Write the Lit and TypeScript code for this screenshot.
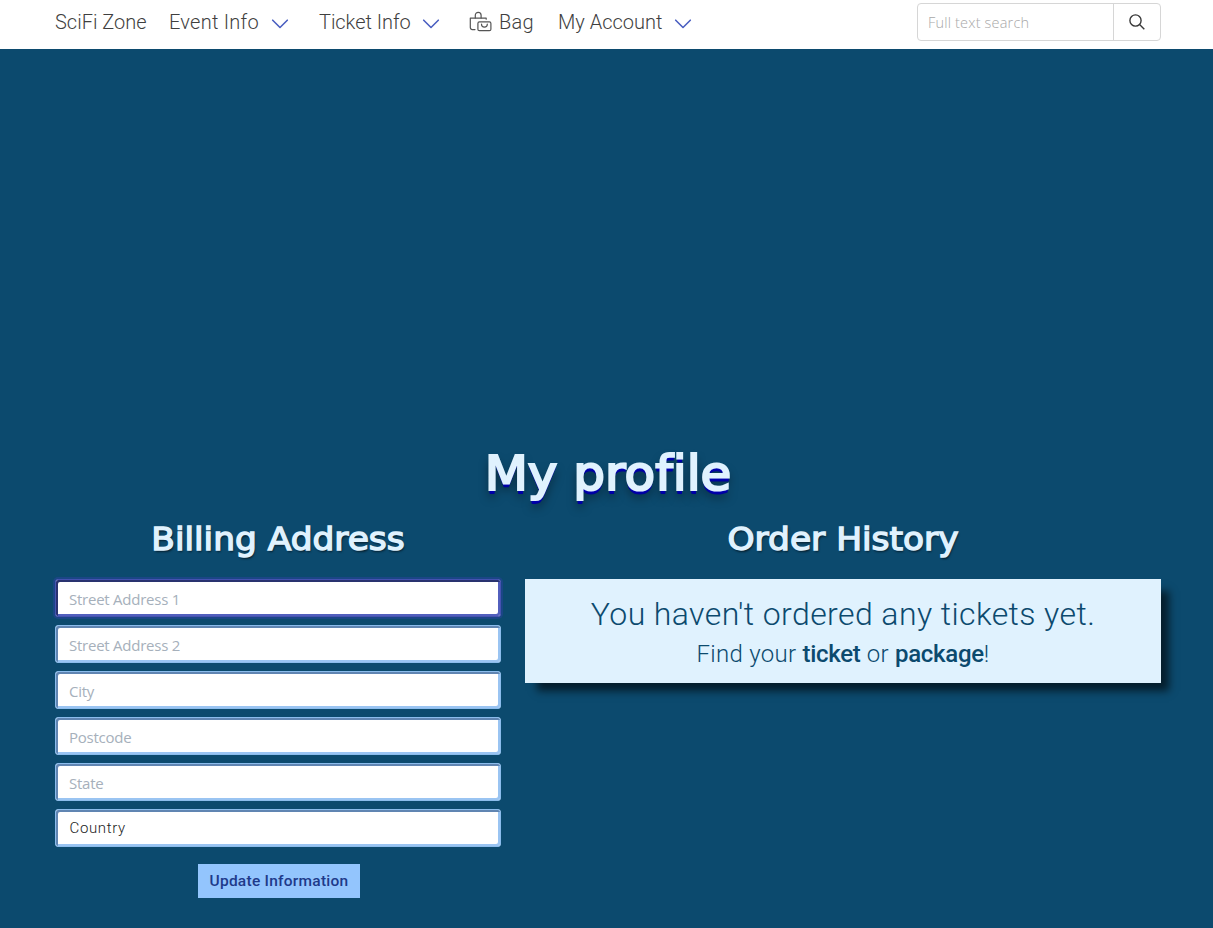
import { LitElement, html, css } from "lit";
import { customElement, property } from "lit/decorators.js";

const chevron = html`<svg class="chevron" width="18" height="12" viewBox="0 0 18 12" fill="none" stroke="#4a5fc1" stroke-width="1.6" stroke-linecap="round" stroke-linejoin="round"><path d="M1.700 2.200 9 9.500 16.300 2.200" /></svg>`;

const bag = html`<svg class="bag" width="24" height="22" viewBox="0 0 24 22" fill="none" stroke="#555" stroke-width="1.2" stroke-linejoin="round" stroke-linecap="round">
  <path d="M6 18.600H3.300A2 2 0 0 1 1.300 16.600V7.100H17.200V8.200" />
  <path d="M6.300 7V4.200A2.900 2.900 0 0 1 12.100 4.200V7" />
  <rect x="8.900" y="10.900" width="13" height="8.800" rx="1.500" />
  <path d="M12.500 13.200A2.900 2.900 0 0 0 18.300 13.200" />
</svg>`;

const magnifier = html`<svg width="18" height="18" viewBox="0 0 18 18" fill="none" stroke="#383838" stroke-width="1.4"><circle cx="7.500" cy="7.500" r="5.600" /><path d="M11.600 11.600 16.300 16.200" /></svg>`;

@customElement("site-nav")
export class SiteNav extends LitElement {
  static styles = css`
    :host { display: block; background: #fff; height: 49px; font: 300 20px/44px Roboto, sans-serif; color: #3f3f3f; }
    .bar { display: flex; padding: 0 52px 0 55px; height: 49px; box-sizing: border-box; }
    .links { display: flex; flex: 1; height: 44px; white-space: nowrap; }
    .item { display: flex; align-items: center; }
    .home { width: 114px; }
    .event, .ticket, .account { gap: 12px; }
    .event, .ticket { width: 150px; }
    .bagitem { width: 89px; gap: 6px; letter-spacing: 0.300px; }
    .event .label { width: 90px; letter-spacing: 0.250px; }
    .ticket .label { width: 91px; letter-spacing: -0.050px; }
    .account .label { width: 104px; }
    .chevron { margin-top: 4px; }
    .search { display: flex; box-sizing: border-box; width: 244px; height: 38px; margin-top: 3px; border: 1px solid #d6d6d6; border-radius: 4px; overflow: hidden; }
    .field { flex: 1; min-width: 0; border: 0; padding: 0 10px; outline: 0; background: none; font: 300 14.500px "Open Sans", sans-serif; letter-spacing: 0.180px; }
    .field::placeholder { color: #a8a8a8; opacity: 1; }
    .go { width: 47px; border: 0; border-left: 1px solid #d6d6d6; background: none; padding: 0; display: grid; place-items: center; }
  `;
  render() {
    return html`<nav class="bar">
      <div class="links">
        <a class="item home">SciFi Zone</a>
        <a class="item event"><span class="label">Event Info</span>${chevron}</a>
        <a class="item ticket"><span class="label">Ticket Info</span>${chevron}</a>
        <a class="item bagitem">${bag}<span>Bag</span></a>
        <a class="item account"><span class="label">My Account</span>${chevron}</a>
      </div>
      <div class="search"><input class="field" placeholder="Full text search" /><button class="go" aria-label="Search">${magnifier}</button></div>
    </nav>`;
  }
}

@customElement("billing-form")
export class BillingForm extends LitElement {
  @property({ type: Array }) fields = ["Street Address 1", "Street Address 2", "City", "Postcode", "State"];
  static styles = css`
    :host { display: block; }
    .form { display: flex; flex-direction: column; gap: 8px; }
    .input { box-sizing: border-box; width: 100%; height: 38px; padding: 1px 13px 0; border: 1px solid #8bbcec; border-radius: 3px; background: #fff; outline: 0; font: 15px "Open Sans", sans-serif; letter-spacing: -0.240px; color: #333; box-shadow: inset 2px 2px 0 #6085b2, inset -2px -2px 0 #9ac4f2; }
    .input::placeholder { color: #a6b0bb; opacity: 1; }
    .active { border-color: #4652b0; box-shadow: inset 2px 2px 0 #29336f, inset -2px -2px 0 #525fbd, 0 0 0 2px rgba(51, 65, 170, 0.4); }
    .country { display: flex; align-items: center; padding: 0 13.500px; font: 300 15px Roboto, sans-serif; letter-spacing: 0.650px; color: #222; }
    .update { align-self: center; margin: 9px 0 0 2px; width: 162px; height: 34px; border: 0; padding: 0; background: #93c5fd; color: #1e3a8a; font: 500 15.500px Roboto, sans-serif; letter-spacing: 0.250px; white-space: nowrap; }
  `;
  render() {
    return html`<form class="form">
      ${this.fields.map((f, i) => html`<input class="input ${i === 0 ? "active" : ""}" placeholder=${f} />`)}
      <div class="input country">Country</div>
      <button class="update" type="button">Update Information</button>
    </form>`;
  }
}

@customElement("app-root")
export class AppRoot extends LitElement {
  static styles = css`
    :host { display: block; height: 928px; overflow: hidden; background: #0c4a6e; }
    .content { padding: 396px 52px 0 55px; }
    .title, .subtitle { margin: 0; text-align: center; font-family: "DejaVu Sans", sans-serif; font-weight: 400; font-variant-ligatures: none; color: #e0f2fe; white-space: nowrap; }
    .title { height: 68px; font-size: 48px; line-height: 56px; transform: scaleX(1.042); -webkit-text-stroke: 2.200px #e0f2fe; text-shadow: 0 3px 0 #0000ad, 0 4px 0 #00009c, 0 7px 9px rgba(0, 0, 0, 0.5); }
    .columns { display: grid; grid-template-columns: 446px 636px; gap: 24px; }
    .subtitle { height: 66px; font-size: 32px; line-height: 53px; transform: scaleX(1.075); -webkit-text-stroke: 1.400px #e0f2fe; text-shadow: 1px 2px 2px rgba(0, 0, 0, 0.55); }
    .card { box-sizing: border-box; height: 104px; padding-top: 14px; background: #e0f2fe; color: #0c4a6e; text-align: center; font-family: Roboto, sans-serif; font-weight: 300; box-shadow: 10px 10px 8px -2px rgba(0, 0, 0, 0.600); white-space: nowrap; }
    .lead { margin: 0; font-size: 32px; line-height: 42px; letter-spacing: 0.400px; }
    .hint { margin: 0; font-size: 24px; line-height: 38px; letter-spacing: 0.300px; }
    .strong { font-weight: 500; letter-spacing: -0.300px; }
  `;
  render() {
    return html`<site-nav></site-nav>
      <main class="content">
        <h1 class="title">My profile</h1>
        <div class="columns">
          <section><h2 class="subtitle">Billing Address</h2><billing-form></billing-form></section>
          <section><h2 class="subtitle">Order History</h2>
            <div class="card"><p class="lead">You haven't ordered any tickets yet.</p><p class="hint">Find your <a class="strong">ticket</a> or <a class="strong">package</a>!</p></div>
          </section>
        </div>
      </main>`;
  }
}
